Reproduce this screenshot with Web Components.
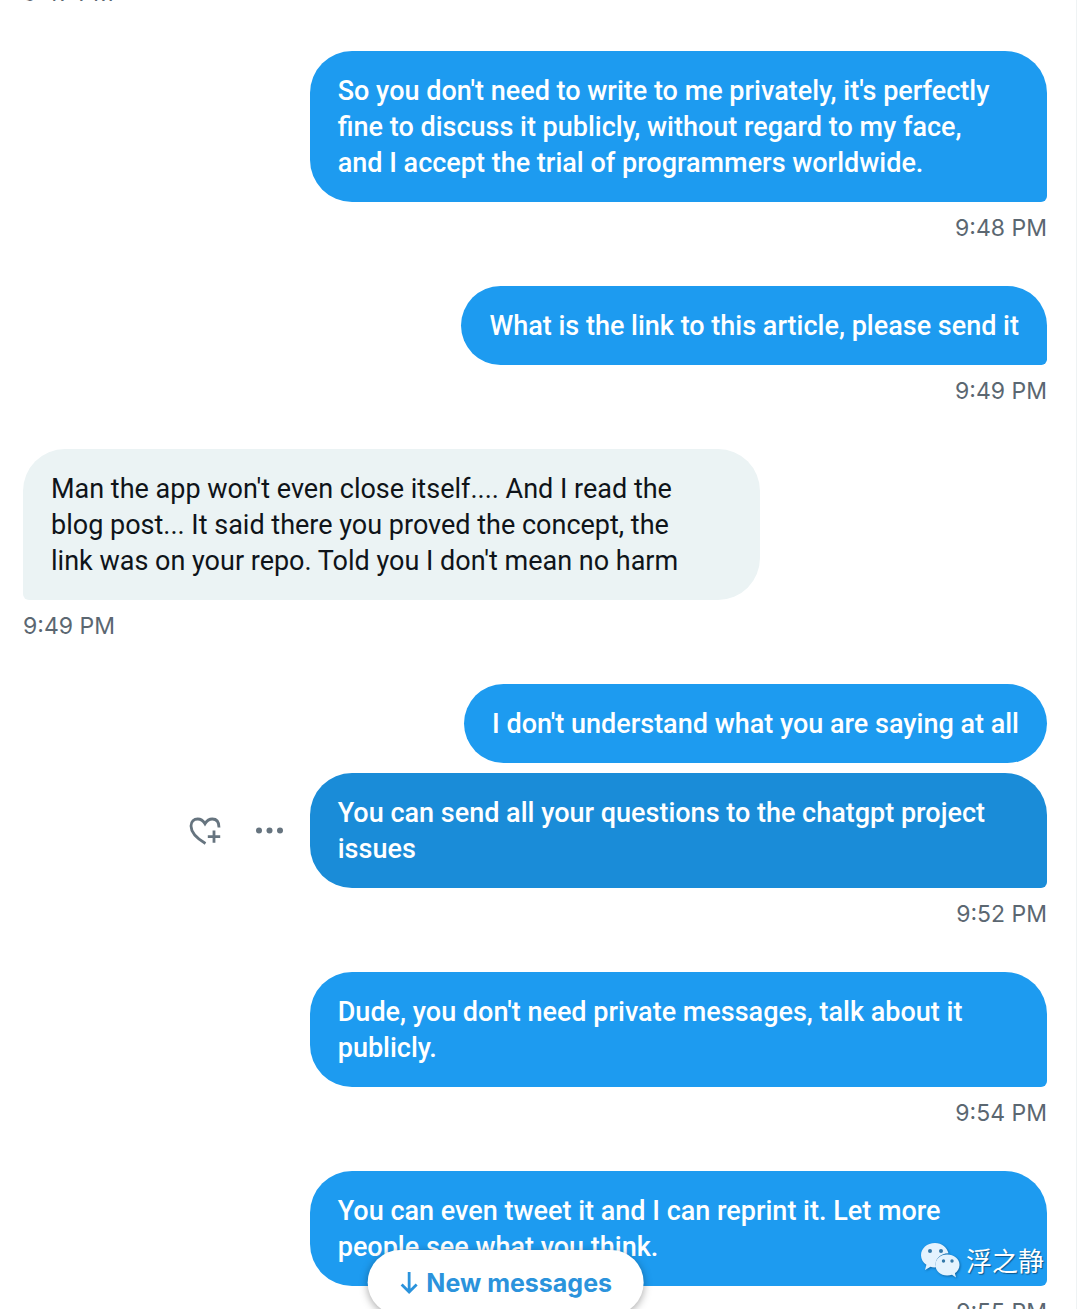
<!DOCTYPE html>
<html lang="en">
<head>
<meta charset="utf-8">
<title>Messages</title>
<style>
html,body{margin:0;height:100%;overflow:hidden;background:#fff}
body{font-family:Inter,"Liberation Sans","Noto Sans CJK SC",sans-serif}
</style>
</head>
<body>
<chat-thread>
  <chat-time>9:47 PM</chat-time>
  <chat-message mine wide>So you don't need to write to me privately, it's perfectly<br>fine to discuss it publicly, without regard to my face,<br>and I accept the trial of programmers worldwide.</chat-message>
  <chat-time mine>9:48 PM</chat-time>
  <chat-message mine>What is the link to this article, please send it</chat-message>
  <chat-time mine>9:49 PM</chat-time>
  <chat-message wide>Man the app won't even close itself.... And I read the<br>blog post... It said there you proved the concept, the<br>link was on your repo. Told you I don't mean no harm</chat-message>
  <chat-time>9:49 PM</chat-time>
  <chat-message mine grouped>I don't understand what you are saying at all</chat-message>
  <chat-message mine wide active>You can send all your questions to the chatgpt project<br>issues<message-actions slot="actions"></message-actions></chat-message>
  <chat-time mine>9:52 PM</chat-time>
  <chat-message mine wide>Dude, you don't need private messages, talk about it<br>publicly.</chat-message>
  <chat-time mine>9:54 PM</chat-time>
  <chat-message mine wide>You can even tweet it and I can reprint it. Let more<br>people see what you think.</chat-message>
  <chat-time mine>9:55 PM</chat-time>
  <new-messages slot="overlay">New messages</new-messages>
  <account-mark slot="overlay">浮之静</account-mark>
</chat-thread>
<script>
function define(name, html) {
  customElements.define(name, class extends HTMLElement {
    constructor() {
      super();
      this.attachShadow({mode: 'open'}).innerHTML = html;
    }
  });
}

define('chat-thread', `
<style>
:host{display:block;position:relative;box-sizing:border-box;height:100vh;overflow:hidden;margin-right:3px;padding:0 29px 0 23px;border-right:1px solid #eff3f4}
main{display:flex;flex-direction:column;margin-top:-33px}
</style>
<main><slot></slot></main>
<slot name="overlay"></slot>`);

define('chat-time', `
<style>
:host{display:block;height:84px;box-sizing:border-box;padding-top:10px;font-size:23px;line-height:32px;color:#5b6771}
:host([mine]){text-align:right}
</style>
<slot></slot>`);

define('chat-message', `
<style>
:host{display:flex;align-items:center;gap:26px}
:host([mine]){justify-content:flex-end}
:host([grouped]){margin-bottom:10px}
.bubble{box-sizing:border-box;max-width:72%;padding:22px 28px 21px;border-radius:42px 42px 42px 6px;background:#ebf3f4;color:#0f1419;font-family:Roboto,"Liberation Sans",sans-serif;font-size:27px;line-height:36px;white-space:nowrap}
:host([wide]) .bubble{width:72%}
:host([mine]) .bubble{background:#1d9bf0;color:#fff;font-weight:500;border-radius:42px 42px 6px 42px}
:host([mine][grouped]) .bubble{border-radius:42px}
:host([mine][active]) .bubble{background:#1a8cd8}
</style>
<slot name="actions"></slot>
<div class="bubble"><slot></slot></div>`);

define('message-actions', `
<style>
:host{display:flex;gap:32px;align-items:center}
button{all:unset;display:block;cursor:pointer}
svg{display:block}
</style>
<button type="button" aria-label="Add reaction"><svg width="34" height="32" viewBox="0 0 34 32" fill="none" stroke="#66747f" stroke-width="2.8"><path d="M17.500 28.500C9 23.500 3 17.500 3 11C3 6.500 6 4 9.700 4C12.800 4 15.300 6 17 8.800C18.700 6 21.200 4 24.300 4C28 4 31 6.500 31 12.500M26 15.500V27.800M19.800 21.700H32.200"/></svg></button>
<button type="button" aria-label="More"><svg width="30" height="32" viewBox="0 0 30 32" fill="#66747f"><circle cx="5" cy="15.500" r="3"/><circle cx="15.500" cy="15.500" r="3"/><circle cx="26" cy="15.500" r="3"/></svg></button>`);

define('new-messages', `
<style>
:host{position:absolute;left:47%;top:1250px;transform:translateX(-50%)}
button{display:flex;align-items:center;gap:8px;height:65px;margin:0;padding:0 32px;border:0;border-radius:33px;background:#fff;color:#2b93dc;font:700 25px/36px Inter,"Liberation Sans",sans-serif;white-space:nowrap;box-shadow:0 2px 8px rgba(0,0,0,.35)}
</style>
<button type="button"><svg width="19" height="24" viewBox="0 0 19 24" fill="none" stroke="currentColor" stroke-width="2.800"><path d="M9.500 1V21M2 13.500L9.500 21L17 13.500"/></svg><slot></slot></button>`);

define('account-mark', `
<style>
:host{position:absolute;right:32px;top:1240px;display:flex;align-items:center;gap:6px;color:#fff;font:26px/40px "Noto Sans CJK SC",sans-serif;text-shadow:1px 1px 1px rgba(0,50,90,.65)}
svg{display:block;filter:drop-shadow(1px 1px 1px rgba(0,50,90,.5))}
</style>
<svg width="40" height="36" viewBox="0 0 40 36"><path fill="#e4f3fe" d="M15 1C7 1 1 6.500 1 13.200C1 17.200 3.100 20.500 6.400 22.800L5 28L10.500 24.800C12 25.300 14 25.500 16 25.300C14 17.500 20 11.500 28.500 11.300C27 5.300 22 1 15 1Z"/><path fill="#e4f3fe" d="M27 12.500C20.300 12.500 15.500 17 15.500 23C15.500 28.900 20.500 33.500 27.200 33.500C29 33.500 30.500 33.200 32 32.700L36 35.500L34.900 31.300C37.500 29.400 39.500 26.500 39.500 23C39.500 17 34 12.500 27 12.500Z"/><g fill="#3479a9"><circle cx="10" cy="9" r="2"/><circle cx="21" cy="9" r="2"/><circle cx="23.500" cy="19" r="1.700"/><circle cx="32" cy="19" r="1.700"/></g></svg><slot></slot>`);
</script>
</body>
</html>
